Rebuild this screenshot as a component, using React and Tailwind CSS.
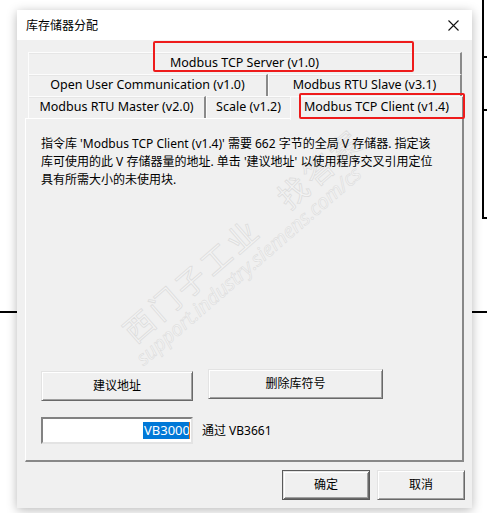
import React from "react";

const font = "font-['Noto_Sans','Noto_Sans_CJK_SC',sans-serif]";

function Tab({ children, className = "" }) {
  return (
    <div
      className={`h-[22px] flex items-center justify-center bg-[#f0f0f0] border-t border-l border-t-[#fcfcfc] border-l-[#fcfcfc] border-r-2 border-r-[#8a8a8a] shadow-[inset_0_1px_0_#e6e6e6] text-[12.5px] text-black whitespace-nowrap ${className}`}
    >
      {children}
    </div>
  );
}

function Btn({ children, className = "" }) {
  return (
    <div
      className={`flex items-center justify-center bg-[#f0f0f0] border border-t-[#e3e3e3] border-l-[#e3e3e3] border-r-[#696969] border-b-[#696969] shadow-[inset_1px_1px_0_#ffffff,inset_-1px_-1px_0_#a0a0a0] text-[12px] text-black ${className}`}
    >
      {children}
    </div>
  );
}

export default function App() {
  return (
    <div className={`relative w-[487px] h-[513px] bg-white overflow-hidden ${font}`}>
      {/* background window lines */}
      <div className="absolute left-[482px] top-0 w-[2px] h-[219px] bg-black" />
      <div className="absolute left-[482px] top-[56px] w-[6px] h-[2px] bg-black" />
      <div className="absolute left-[482px] top-[109px] w-[6px] h-[2px] bg-black" />
      <div className="absolute left-[482px] top-[217px] w-[6px] h-[2px] bg-black" />
      <div className="absolute left-0 top-[311px] w-[18px] h-[2px] bg-black" />
      <div className="absolute left-[471px] top-[311px] w-[16px] h-[2px] bg-black" />

      {/* dialog */}
      <div className="absolute left-[17px] top-[10px] w-[455px] h-[498px] flex flex-col bg-[#f0f0f0] shadow-[0_2px_10px_rgba(0,0,0,0.28)]">
        {/* title bar */}
        <div className="h-[30px] bg-white flex items-center justify-between pl-[9px] pr-[12px]">
          <span className="text-[12px] text-black font-['Noto_Sans_CJK_SC',sans-serif]">库存储器分配</span>
          <svg width="11" height="11" viewBox="0 0 11 11" className="mr-[1px]">
            <path d="M0.5 0.5 L10.5 10.5 M10.5 0.5 L0.5 10.5" stroke="#111" strokeWidth="1.1" />
          </svg>
        </div>

        {/* body */}
        <div className="flex-1 flex flex-col pt-[12px] px-[8px]">
          {/* tabs */}
          <div className="relative flex flex-col pl-[3px] pr-[2px]">
            <Tab className="w-full">Modbus TCP Server (v1.0)</Tab>
            <div className="flex">
              <Tab className="w-[240px]">Open User Communication (v1.0)</Tab>
              <Tab className="flex-1">Modbus RTU Slave (v3.1)</Tab>
            </div>
            <div className="flex items-end">
              <Tab className="w-[178px]">Modbus RTU Master (v2.0)</Tab>
              <Tab className="w-[86px]">Scale (v1.2)</Tab>
              <div className="relative z-10 -ml-[2px] -mr-[2px] mb-[-2px] flex-1 h-[24px] flex items-center justify-center bg-[#f0f0f0] border-t border-l border-t-[#fcfcfc] border-l-[#fcfcfc] border-r-2 border-r-[#8a8a8a] text-[12.5px] text-black whitespace-nowrap pb-[2px]">
                Modbus TCP Client (v1.4)
              </div>
            </div>
            {/* red annotation boxes */}
            <div className="absolute left-[128px] top-[-11px] w-[261px] h-[31px] border-2 border-[#ee1b1b] rounded-[2px] z-20" />
            <div className="absolute left-[274px] top-[41px] w-[166px] h-[26px] border-2 border-[#ee1b1b] rounded-[2px] z-20" />
          </div>

          {/* panel */}
          <div className="relative h-[344px] border-l border-t border-l-white border-t-white border-r-2 border-b-2 border-r-[#888888] border-b-[#888888] flex flex-col pl-[15px] pt-[16px] overflow-hidden">
            {/* watermark */}
            <div className="absolute left-[108px] top-[196px] origin-left rotate-[-41deg] pointer-events-none select-none">
              <div className="text-[30px] leading-[34px] text-[#f3f3f3] [-webkit-text-stroke:0.8px_#dddddd] tracking-[4px] font-['Noto_Sans_CJK_SC',sans-serif] whitespace-nowrap">
                西门子工业　找答案
              </div>
              <div className="text-[20px] leading-[22px] italic text-[#f3f3f3] [-webkit-text-stroke:0.6px_#dddddd] whitespace-nowrap -ml-[8px]">
                support.industry.siemens.com/cs
              </div>
            </div>

            <p className="relative text-[12px] leading-[18px] text-black">
              指令库 'Modbus TCP Client (v1.4)' 需要 662 字节的全局 V 存储器. 指定该
              <br />
              库可使用的此 V 存储器量的地址. 单击 '建议地址' 以使用程序交叉引用定位
              <br />
              具有所需大小的未使用块.
            </p>

            <div className="relative mt-[180px] flex items-start gap-[15px]">
              <Btn className="w-[152px] h-[30px] mt-[2px]">建议地址</Btn>
              <Btn className="w-[175px] h-[30px]">删除库符号</Btn>
            </div>

            <div className="relative mt-[16px] flex items-center gap-[9px]">
              <div className="w-[152px] h-[27px] bg-white border-2 border-t-[#828282] border-l-[#828282] border-r-[#e3e3e3] border-b-[#e3e3e3] flex items-center justify-end pr-[1px] overflow-hidden">
                <span className="bg-[#0078d7] text-white text-[13px] leading-[17px] pl-[1px]">VB3000</span>
                <span className="w-[1px] h-[17px] bg-[#e8731c] -ml-[1px]" />
              </div>
              <span className="text-[12px] text-black">通过 VB3661</span>
            </div>
          </div>

          {/* bottom buttons */}
          <div className="flex justify-end gap-[7px] mt-[8px] mr-[-1px]">
            <div className="w-[88px] h-[30px] flex items-center justify-center border border-[#5a5a5a] bg-[#f0f0f0] shadow-[inset_1px_1px_0_#e3e3e3,inset_-1px_-1px_0_#696969,inset_2px_2px_0_#ffffff,inset_-2px_-2px_0_#a0a0a0] text-[12px] text-black">
              确定
            </div>
            <Btn className="w-[88px] h-[30px]">取消</Btn>
          </div>
        </div>
      </div>
    </div>
  );
}
